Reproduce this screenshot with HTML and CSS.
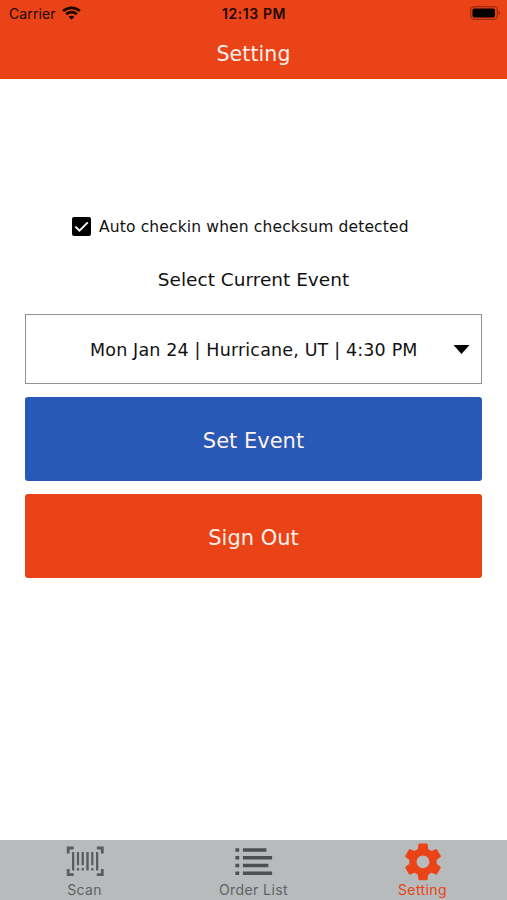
FILE: index.html
```html
<!DOCTYPE html>
<html lang="en">
<head>
<meta charset="utf-8">
<title>Setting</title>
<link rel="stylesheet" href="styles.css">
</head>
<body>
<header class="header">
  <div class="status">
    <div class="carrier"><span class="carrier-name">Carrier</span>
      <svg class="wifi" viewBox="0 0 19 14"><g fill="none" stroke="#210700" stroke-width="2.7"><path d="M1.2 5.1C5.8.7 13.2.7 17.8 5.1"/><path d="M4.2 8.3c3-2.8 7.6-2.8 10.6 0"/></g><path fill="#210700" d="M6.5 10.8c1.7-1.5 4.3-1.5 6 0l-3 3z"/></svg>
    </div>
    <div class="clock"><span class="clock-text">12:13 PM</span></div>
    <div class="power">
      <svg class="battery" viewBox="0 0 31 14"><rect x=".7" y=".7" width="26.6" height="12.6" rx="3.6" fill="none" stroke="#9c2c0d" stroke-width="1.2"/><rect x="2.4" y="2.4" width="22.6" height="9.2" rx="2"/><path fill="#9c2c0d" d="M28.6 4.8c2 .8 2 3.6 0 4.4z"/></svg>
    </div>
  </div>
  <h1 class="title">Setting</h1>
</header>
<main class="content">
  <div class="check-row">
    <svg class="checkbox" viewBox="0 0 20 20"><rect width="20" height="20" rx="2"/><path d="M3.5 10.1l4.4 4.3 8.7-8.7" fill="none" stroke="#fff" stroke-width="2"/></svg>
    <span class="check-label">Auto checkin when checksum detected</span>
  </div>
  <p class="prompt">Select Current Event</p>
  <div class="select">
    <span class="select-value">Mon Jan 24 | Hurricane, UT | 4:30 PM</span>
    <svg class="arrow" viewBox="0 0 16 9"><path d="M0 0h16L8 9z"/></svg>
  </div>
  <button class="button button-blue">Set Event</button>
  <button class="button button-orange">Sign Out</button>
</main>
<nav class="tabs">
  <div class="tab">
    <svg class="tab-icon" viewBox="0 0 38 38"><path fill="none" stroke="#5b5c5d" stroke-width="2.8" d="M2.200 10.500V5h5.500M30.800 5h5.500v5.500M36.300 26v5.700h-5.500M7.700 31.700H2.200V26"/><path fill="#5b5c5d" d="M6 9h2.300v18.500H6zM10.900 9h2.200v13.300h-2.200zM15.600 9h2.300v13.300h-2.300zM20.300 9h2.400v18.500h-2.400zM25.200 9h2.200v13.300h-2.200zM30 9h2.300v18.500H30zM10.900 25.100h2.200v2.400h-2.200zM15.600 25.100h2.300v2.400h-2.300zM25.200 25.100h2.200v2.400h-2.200z"/></svg>
    <span class="tab-label">Scan</span>
  </div>
  <div class="tab">
    <svg class="tab-icon" viewBox="0.6 0 38 38"><path fill="#4e4f50" d="M1 5.200h3.800v3.600H1zM8.500 5.200H32v3.600H8.500zM1 13h3.800v3.600H1zM8.500 13H37.700v3.600H8.500zM1 20.700h3.800v3.600H1zM8.500 20.700H34v3.600H8.500zM1 28.400h3.800V32H1zM8.500 28.400H37.700V32H8.500z"/></svg>
    <span class="tab-label order-label">Order List</span>
  </div>
  <div class="tab tab-active">
    <svg class="tab-icon" viewBox="1.620 1.700 20.760 20.760"><path fill="#e94317" d="M19.430 12.980c.04-.32.07-.64.07-.98s-.03-.66-.07-.98l2.110-1.650c.19-.15.24-.42.12-.64l-2-3.460c-.12-.22-.39-.3-.61-.22l-2.490 1c-.52-.4-1.080-.73-1.690-.98l-.38-2.650C14.460 2.180 14.250 2 14 2h-4c-.25 0-.46.18-.49.42l-.38 2.650c-.61.25-1.170.59-1.690.98l-2.490-1c-.23-.09-.49 0-.61.22l-2 3.460c-.13.22-.07.49.12.64l2.110 1.650c-.04.32-.07.65-.07.98s.03.66.07.98l-2.110 1.650c-.19.15-.24.42-.12.64l2 3.460c.12.22.39.3.61.22l2.490-1c.52.4 1.080.73 1.690.98l.38 2.650c.03.24.24.42.49.42h4c.25 0 .46-.18.49-.42l.38-2.650c.61-.25 1.170-.59 1.690-.98l2.490 1c.23.09.49 0 .61-.22l2-3.460c.12-.22.07-.49-.12-.64l-2.110-1.650zM12 15.500c-1.930 0-3.500-1.570-3.500-3.500s1.570-3.500 3.500-3.500 3.500 1.570 3.500 3.500-1.570 3.500-3.500 3.500z"/></svg>
    <span class="tab-label setting-label">Setting</span>
  </div>
</nav>
</body>
</html>
```
FILE: styles.css
```css
* { box-sizing: border-box; }
body {
  margin: 0;
  height: 900px;
  display: flex;
  flex-direction: column;
  background: #fff;
  color: #111;
  font-family: "DejaVu Sans", sans-serif;
  overflow: hidden;
}
.header { height: 79px; background: #e94317; }
.status {
  height: 27px;
  padding: 0 6px 0 9px;
  display: grid;
  grid-template-columns: 1fr auto 1fr;
  align-items: center;
  font-family: Inter, sans-serif;
  font-size: 14px;
  line-height: 27px;
  color: #210700;
}
.carrier { display: flex; align-items: center; gap: 6px; }
.carrier-name { letter-spacing: 0.1px; }
.wifi { width: 19px; height: 14px; margin-top: -2px; }
.clock { font-weight: 600; letter-spacing: 0.6px; padding-right: 2px; }
.power { display: flex; justify-content: flex-end; }
.battery { width: 31px; height: 14px; margin-top: -1px; }
.title {
  margin: 0;
  text-align: center;
  font-size: 20.5px;
  font-weight: 400;
  letter-spacing: 0.1px;
  line-height: 54px;
  color: #fff0eb;
}
.content { flex: 1; padding: 137px 25px 0; }
.check-row {
  display: flex;
  align-items: center;
  gap: 8px;
  height: 21px;
  padding-left: 47px;
  font-size: 15.5px;
}
.checkbox { width: 19px; height: 19px; flex: none; }
.check-label, .select-value { white-space: nowrap; }
.check-label { letter-spacing: 0.15px; }
.prompt {
  margin: 29px 0 0;
  text-align: center;
  font-size: 18.5px;
  line-height: 28px;
}
.select {
  display: flex;
  align-items: center;
  height: 70px;
  margin-top: 20px;
  padding: 0 11px 0 64px;
  border: 1px solid #929292;
  font-size: 17.5px;
}
.select-value { flex: 1; letter-spacing: 0.16px; padding-top: 1px; }
.arrow { width: 17px; height: 9px; }
.button {
  display: block;
  width: 100%;
  height: 84px;
  margin-top: 13px;
  padding: 3px 0 0;
  border: 0;
  border-radius: 3px;
  font-family: inherit;
  font-size: 21px;
  color: #fff0eb;
}
.button-blue { background: #2859b7; }
.button-orange { background: #e94317; }
.tabs {
  height: 60px;
  display: grid;
  grid-template-columns: repeat(3, 1fr);
  background: #b8bbbc;
}
.tab {
  display: flex;
  flex-direction: column;
  align-items: center;
  padding-top: 3px;
  font-family: Inter, sans-serif;
  font-size: 14px;
  line-height: 18px;
  color: #5f6162;
}
.tab-icon { width: 38px; height: 38px; }
.tab-label { letter-spacing: 0.3px; }
.order-label { letter-spacing: 0.4px; }
.setting-label { letter-spacing: 0.4px; }
.tab-active { color: #e94317; }
```
